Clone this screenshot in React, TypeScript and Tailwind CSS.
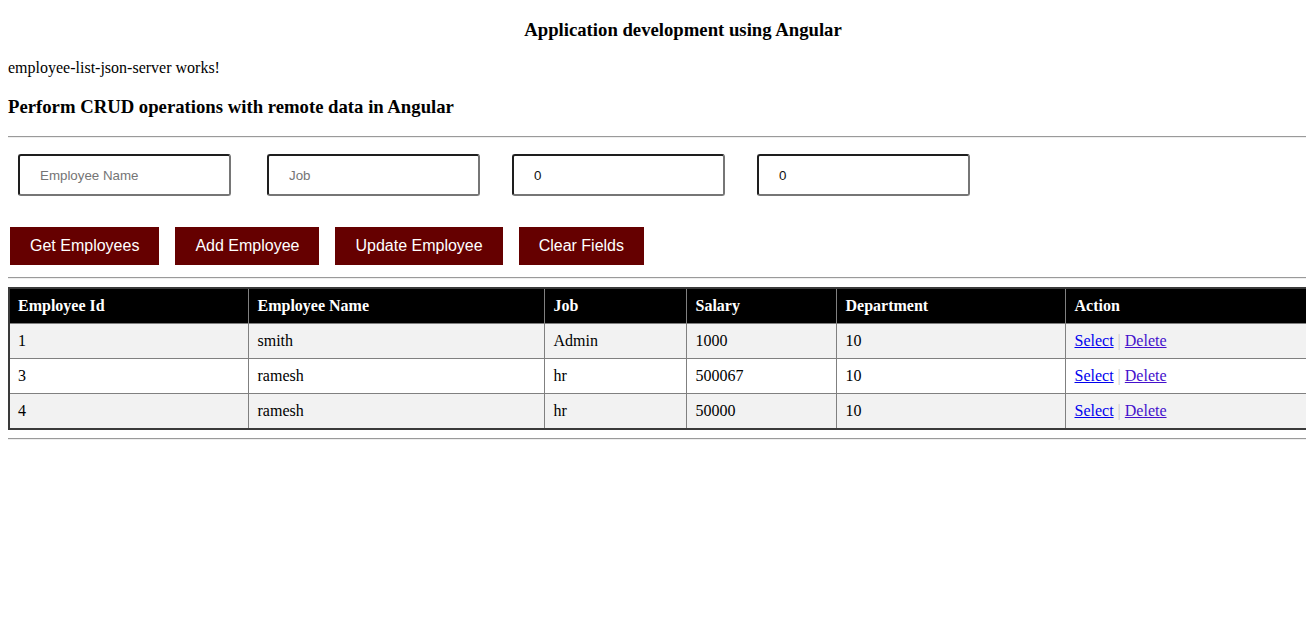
import React from "react";

interface Employee {
  id: number;
  name: string;
  job: string;
  salary: number;
  dept: number;
}

// rows from the json-server
const employees: Employee[] = [
  { id: 1, name: "smith", job: "Admin", salary: 1000, dept: 10 },
  { id: 3, name: "ramesh", job: "hr", salary: 500067, dept: 10 },
  { id: 4, name: "ramesh", job: "hr", salary: 50000, dept: 10 },
];

const Rule = ({ className = "" }: { className?: string }) => (
  <hr className={`h-0 border-0 border-t border-t-[#9a9a9a] border-b border-b-[#eeeeee] ${className}`} />
);

const Field = ({ placeholder, value, className = "" }: { placeholder?: string; value?: string; className?: string }) => (
  <input
    readOnly
    placeholder={placeholder}
    value={value ?? ""}
    className={`w-[213px] h-[42px] pl-5 text-[13.33px] text-[#111] placeholder:text-[#757575] bg-white border-2 border-t-[#1e1e1e] border-l-[#1e1e1e] border-r-[#767676] border-b-[#767676] rounded-[3px] outline-none ${className}`}
    style={{ fontFamily: '"Liberation Sans", Arial, sans-serif' }}
  />
);

const Btn = ({ label, className = "" }: { label: string; className?: string }) => (
  <button
    className={`h-[38px] px-5 bg-[#650000] text-white text-[16px] leading-[18px] ${className}`}
    style={{ fontFamily: '"Liberation Sans", Arial, sans-serif' }}
  >
    {label}
  </button>
);

// first column sits against the thick outer border, the rest get 1px more inset
const cell = (i: number) => `border border-[#808080] py-2 pr-2 ${i === 0 ? "pl-2" : "pl-[9px]"}`;

export default function App() {
  return (
    <div className="w-[1306px] h-[635px] overflow-hidden bg-white">
      <div
        className="w-[1366px] px-2 text-black"
        style={{ fontFamily: '"Liberation Serif", "Times New Roman", serif' }}
      >
        <h3 className="pt-[19px] text-center font-bold text-[18.72px] leading-[21px]">
          Application development using Angular
        </h3>
        <p className="mt-[19px] text-[16px] leading-[18px]">employee-list-json-server works!</p>
        <h3 className="mt-[19px] font-bold text-[18.72px] leading-[21px]">
          Perform CRUD operations with remote data in Angular
        </h3>
        <Rule className="mt-[19px]" />

        {/* Form */}
        <div className="flex mt-4">
          <Field placeholder="Employee Name" className="ml-[10px]" />
          <Field placeholder="Job" className="ml-[36px]" />
          <Field value="0" className="ml-[32px]" />
          <Field value="0" className="ml-[32px]" />
        </div>

        <div className="flex gap-4 mt-[31px] ml-[2px]">
          <Btn label="Get Employees" />
          <Btn label="Add Employee" />
          <Btn label="Update Employee" />
          <Btn label="Clear Fields" />
        </div>
        <Rule className="mt-3" />

        {/* Table */}
        <table className="mt-2 w-[1350px] table-fixed border-collapse border-2 border-[#3a3a3a] text-[16px] leading-[18px]">
          <colgroup>
            <col className="w-[239px]" />
            <col className="w-[296px]" />
            <col className="w-[142px]" />
            <col className="w-[150px]" />
            <col className="w-[229px]" />
            <col className="w-[294px]" />
          </colgroup>
          <thead>
            <tr className="bg-black text-white">
              {["Employee Id", "Employee Name", "Job", "Salary", "Department", "Action"].map((h, i) => (
                <th key={h} className={`${cell(i)} text-left font-bold`}>
                  {h}
                </th>
              ))}
            </tr>
          </thead>
          <tbody>
            {employees.map((e, i) => (
              <tr key={e.id} className={i % 2 === 0 ? "bg-[#f2f2f2]" : "bg-white"}>
                <td className={cell(0)}>{e.id}</td>
                <td className={cell(1)}>{e.name}</td>
                <td className={cell(2)}>{e.job}</td>
                <td className={cell(3)}>{e.salary}</td>
                <td className={cell(4)}>{e.dept}</td>
                <td className={cell(5)}>
                  <a href="#" className="text-[#0000ee] underline">Select</a>
                  <span className="text-[#c8c8c8]"> | </span>
                  <a href="#" className="text-[#4410cc] underline">Delete</a>
                </td>
              </tr>
            ))}
          </tbody>
        </table>
        <Rule className="mt-2" />
      </div>
    </div>
  );
}
